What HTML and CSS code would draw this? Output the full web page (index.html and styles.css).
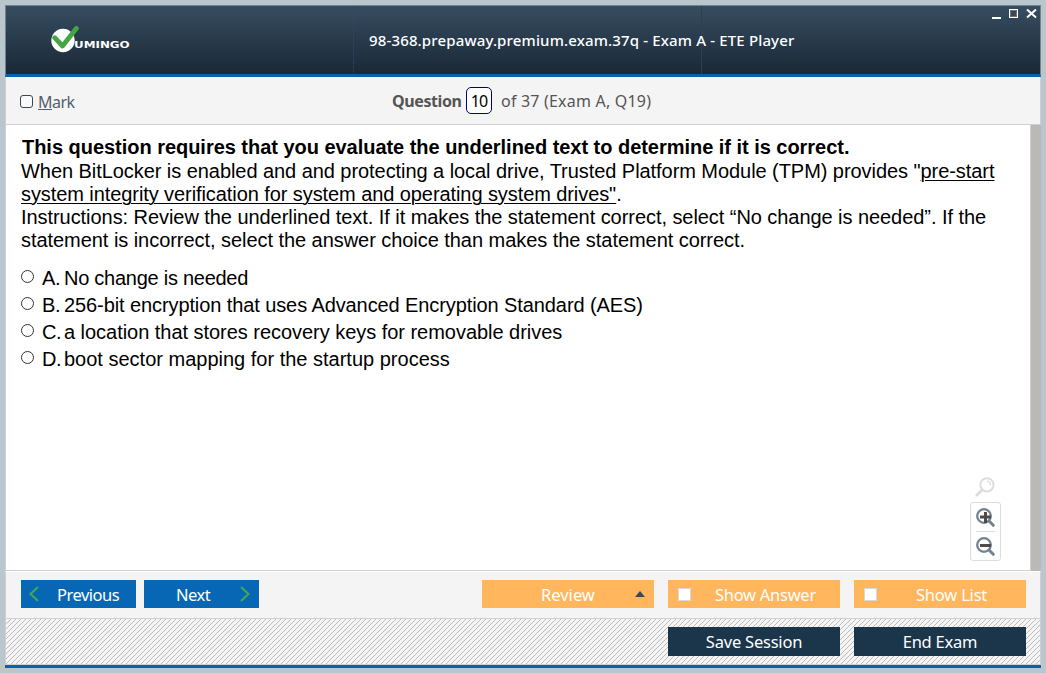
FILE: index.html
```html
<!DOCTYPE html>
<html lang="en">
<head>
<meta charset="utf-8">
<title>ETE Player</title>
<link rel="stylesheet" href="styles.css">
</head>
<body>
<div class="window">
  <header class="header">
    <div class="brand">
      <svg class="brand-mark" width="28" height="27" viewBox="0 0 28 27"><circle cx="12" cy="14.5" r="11.7" fill="#fff"/><path d="M3.7 11.7 L11.5 20 L25.3 2.5" fill="none" stroke="#45a543" stroke-width="4.8" stroke-linecap="round" stroke-linejoin="round"/></svg>
      <span class="brand-name">UMINGO</span>
    </div>
    <h1 class="title"><span class="t-title">98-368.prepaway.premium.exam.37q - Exam A - ETE Player</span></h1>
    <div class="controls">
      <svg width="46" height="11" viewBox="0 0 46 11"><path d="M0 9h9" stroke="#fff" stroke-width="2"/><rect x="17.5" y=".5" width="8" height="8" fill="#34495c" stroke="#fff"/><rect x="18.5" y="1.5" width="6" height="6" fill="none" stroke="#77716d"/><path d="M35 .5L44 8.5M44 .5L35 8.5" stroke="#fff" stroke-width="2"/></svg>
    </div>
  </header>
  <div class="question-bar">
    <label class="mark"><span class="mark-box"></span><span class="t-mark"><u>M</u>ark</span></label>
    <div class="counter"><b class="t-question">Question</b><span class="number">10</span><span class="t-of">of 37 (Exam A, Q19)</span></div>
  </div>
  <main class="content">
    <section class="page">
      <div class="question">
        <div class="line l1"><b>This question requires that you evaluate the underlined text to determine if it is correct.</b></div>
        <div class="line l2">When BitLocker is enabled and and protecting a local drive, Trusted Platform Module (TPM) provides "<u>pre-start</u></div>
        <div class="line l3"><u>system integrity verification for system and operating system drives"</u>.</div>
        <div class="line l4">Instructions: Review the underlined text. If it makes the statement correct, select “No change is needed”. If the</div>
        <div class="line l5">statement is incorrect, select the answer choice than makes the statement correct.</div>
      </div>
      <div class="answers">
        <div class="answer"><i class="radio"></i><span class="letter">A.</span><span class="a1">No change is needed</span></div>
        <div class="answer"><i class="radio"></i><span class="letter">B.</span><span class="a2">256-bit encryption that uses Advanced Encryption Standard (AES)</span></div>
        <div class="answer"><i class="radio"></i><span class="letter">C.</span><span class="a3">a location that stores recovery keys for removable drives</span></div>
        <div class="answer"><i class="radio"></i><span class="letter">D.</span><span class="a4">boot sector mapping for the startup process</span></div>
      </div>
      <div class="zoom-tools">
        <svg class="lens" width="20" height="20" viewBox="0 0 20 20"><g fill="none" stroke="#ddd" stroke-linecap="round"><circle cx="12" cy="7.8" r="6.6" stroke-width="2"/><path d="M12.5 4.2Q15.3 4.7 15.6 7.5" stroke-width="1.3"/><path d="M7 13L2 18" stroke-width="3"/></g></svg>
        <div class="zoom-box">
          <svg width="20" height="20" viewBox="0 0 20 20"><g fill="none" stroke="#74828e"><circle cx="8" cy="8" r="6.8" stroke-width="2.3"/><path d="M13 13L17.3 17.3" stroke-width="3" stroke-linecap="round"/></g><path d="M4 9h11M9.5 4v11" stroke="#4b4b4b" stroke-width="3"/></svg>
          <div class="zoom-line"></div>
          <svg width="20" height="20" viewBox="0 0 20 20"><g fill="none" stroke="#74828e"><circle cx="8" cy="8" r="6.8" stroke-width="2.3"/><path d="M13 13L17.3 17.3" stroke-width="3" stroke-linecap="round"/></g><path d="M4 8.5h11" stroke="#4b4b4b" stroke-width="3"/></svg>
        </div>
      </div>
    </section>
    <div class="scrollbar"></div>
  </main>
  <div class="nav-bar">
    <div class="btn blue prev"><svg width="10" height="16" viewBox="0 0 10 16"><path d="M9 1L1.5 8L9 15" fill="none" stroke="#45a852" stroke-width="2"/></svg><span class="t-prev">Previous</span></div>
    <div class="btn blue next"><span class="t-next">Next</span><svg width="10" height="16" viewBox="0 0 10 16"><path d="M1 1L8.5 8L1 15" fill="none" stroke="#45a852" stroke-width="2"/></svg></div>
    <div class="btn orange review"><span class="t-review">Review</span><i class="caret"></i></div>
    <div class="btn orange check"><i class="box"></i><span class="t-answer">Show Answer</span></div>
    <div class="btn orange check"><i class="box"></i><span class="t-list">Show List</span></div>
  </div>
  <footer class="session-bar">
    <div class="btn dark"><span class="t-save">Save Session</span></div>
    <div class="btn dark"><span class="t-end">End Exam</span></div>
  </footer>
</div>
</body>
</html>
```
FILE: styles.css
```css
* { box-sizing: border-box; }
body { margin: 0; height: 673px; padding: 5px; background: #b9c6cc; font-family: "Noto Sans", sans-serif; overflow: hidden; }
svg { display: block; flex: none; }
span, b { white-space: nowrap; }
.window { width: 1036px; height: 663px; display: flex; flex-direction: column; border-bottom: 3px solid #0463b1; }
.header { height: 72px; flex: none; display: grid; grid-template-columns: 348px 348px 1fr; border: 1px solid #74838b; border-bottom: 3px solid #0463b1; background: linear-gradient(#364d61, #1a2836); }
.brand { display: flex; padding: 20px 0 0 45px; border-right: 1px dotted #34456f; }
.brand-name { margin: 13px 0 0 -5px; height: 12px; color: #fff; font: bold 9px/12px "DejaVu Sans", sans-serif; transform: scaleX(1.32); transform-origin: left; }
.title { margin: 0; padding: 23px 0 0 15px; border-right: 1px solid #2c4053; color: #fff; font-size: 15px; font-weight: 500; line-height: 22px; letter-spacing: 0.15px; }
.controls { justify-self: end; padding: 3px 2px 0 0; }
.question-bar { height: 48px; flex: none; display: flex; background: #f4f4f4; border: 1px solid #d0d0d0; border-top: 0; color: #555; }
.mark { width: 386px; display: flex; padding: 18px 0 0 14px; font-size: 16px; line-height: 15px; color: #53606c; }
.mark-box { width: 13px; height: 13px; margin-right: 5px; border: 1px solid #34495b; border-radius: 3px; background: #fafafa; }
.t-mark { letter-spacing: -0.5px; }
.counter { display: flex; padding-top: 10px; font-size: 16px; line-height: 28px; }
.t-question { width: 69px; letter-spacing: -0.4px; }
.number { width: 26px; height: 27px; margin: 0 9px 0 5px; border: 1px solid #00007c; border-radius: 5px; background: #fff; color: #000; text-align: center; line-height: 27px; letter-spacing: -0.8px; }
.t-of { letter-spacing: 0.2px; }
.content { height: 446px; flex: none; display: flex; border-bottom: 1px solid #d0d0d0; }
.page { width: 1026px; height: 445px; padding: 11px 0 0 15px; position: relative; background: #fff; border: solid #d0d0d0; border-width: 0 1px; font: 20px/23px "Liberation Sans", Arial, sans-serif; color: #000; }
.scrollbar { flex: 1; background: #bbb9b5; height: 446px; }
.line { height: 23px; white-space: nowrap; }
.l1 { height: 24px; padding-left: 1px; letter-spacing: -0.03px; }
.l2, .l4 { letter-spacing: -0.058px; }
.l3 { letter-spacing: -0.08px; }
.l5 { letter-spacing: -0.05px; }
.question u { text-underline-offset: 2px; text-decoration-thickness: 1px; }
.answers { padding-top: 13px; }
.answer { display: flex; height: 27px; line-height: 27px; }
.radio { width: 13px; height: 13px; margin: 5px 8px 0 0; border: 1px solid #333; border-radius: 50%; }
.letter { width: 22px; letter-spacing: -0.4px; }
.a1 { letter-spacing: -0.26px; }
.a2 { letter-spacing: -0.095px; }
.a3 { letter-spacing: -0.035px; }
.zoom-tools { position: absolute; right: 29px; top: 352px; width: 31px; }
.lens { margin-left: 5px; }
.zoom-box { margin-top: 5px; height: 59px; padding: 5px 4px 0 5px; border: 1px solid #ddd; border-radius: 3px; }
.zoom-line { width: 19px; height: 1px; margin: 3px 0 5px 0; background: #ddd; }
.nav-bar { height: 48px; flex: none; display: flex; padding: 8px 0 0 15px; background: #f4f4f4; border: 1px solid #d0d0d0; border-top: 1px solid #fff; }
.btn { height: 28px; flex: none; display: flex; align-items: center; color: #fff; font-size: 16.5px; line-height: 28px; }
.nav-bar span { padding-top: 2px; }
.blue { width: 115px; background: #0867b5; }
.orange { width: 172px; background: #ffb65c; }
.prev { padding-left: 8px; gap: 18px; }
.t-prev, .t-next { letter-spacing: -0.5px; }
.next { margin-left: 8px; padding: 0 9px 0 32px; justify-content: space-between; }
.review { margin-left: 223px; padding: 0 9px 0 59px; justify-content: space-between; }
.caret { border: 5px solid transparent; border-top: 0; border-bottom: 6px solid #34495c; }
.check { margin-left: 14px; padding-left: 10px; }
.box { width: 13px; height: 13px; background: #fff; border: 1px solid #d8d8d8; }
.t-answer { margin-left: 24px; letter-spacing: -0.27px; }
.t-list { margin-left: 39px; letter-spacing: -0.2px; }
.session-bar { height: 46px; flex: none; display: flex; justify-content: flex-end; gap: 14px; padding: 8px 14px 0 0; border: 1px solid #d0d0d0; border-top: 0; background: #f5f5f5 url("data:image/svg+xml,%3Csvg xmlns='http://www.w3.org/2000/svg' width='5' height='5' shape-rendering='crispEdges'%3E%3Cpath fill='%23bcbcbc' d='M0 4h1v1H0zM1 3h1v1H1zM2 2h1v1H2zM3 1h1v1H3zM4 0h1v1H4z'/%3E%3C/svg%3E"); }
.dark { width: 172px; height: 29px; background: #1b354b; justify-content: center; letter-spacing: -0.22px; }
```
